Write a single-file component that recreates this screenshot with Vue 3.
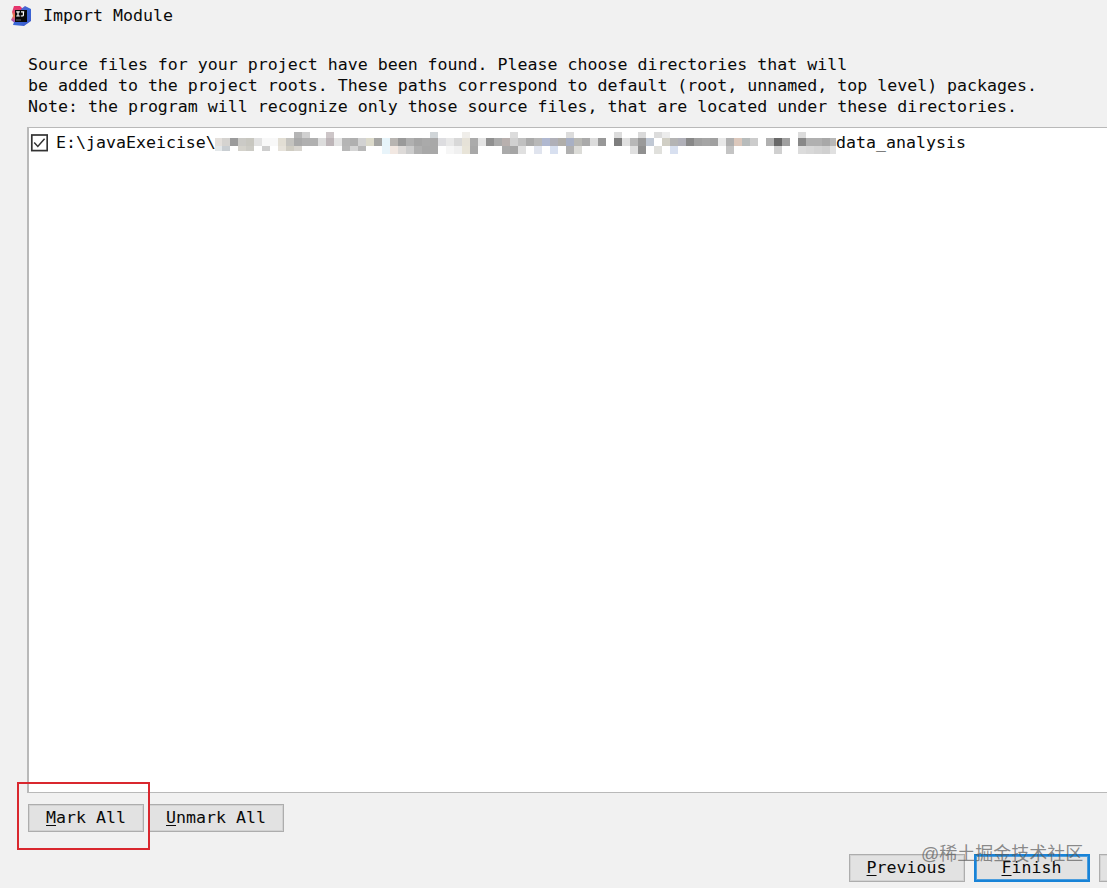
<template>
    <div class="dialog">
        <div class="title-bar">
            <svg class="logo" width="22" height="22" viewBox="0 0 22 22">
                <defs>
                    <linearGradient id="warm" x1="0.6" y1="0" x2="0.4" y2="1">
                        <stop offset="0" stop-color="#e8306c" />
                        <stop offset="0.35" stop-color="#e04470" />
                        <stop offset="0.6" stop-color="#ec8048" />
                        <stop offset="0.8" stop-color="#c85898" />
                        <stop offset="1" stop-color="#7050c8" />
                    </linearGradient>
                    <linearGradient id="cool" x1="0" y1="0" x2="1" y2="1">
                        <stop offset="0" stop-color="#8450b8" />
                        <stop offset="0.5" stop-color="#3868d8" />
                        <stop offset="1" stop-color="#4058c8" />
                    </linearGradient>
                </defs>
                <path d="M4 1 L10 1 L14 5 L13 19 L6 19 L1 15 L3 11 L2 7 Z" fill="url(#warm)" />
                <path d="M11 4 L15 1 L21 4 L21 16 L14 21 L3 20 L4 17 L11 17 Z" fill="url(#cool)" />
                <rect x="5" y="5" width="12" height="12" fill="#080808" />
                <path d="M6.2 6.8h3.6M8 6.8v4.2M6.2 11h3.6M11 6.8h3.2M13.4 6.8v3.2q0 1.3-2.6 .9" stroke="#fff" stroke-width="1.2" fill="none" />
                <path d="M6 15h5" stroke="#666" stroke-width="1" />
            </svg>
            <span class="title">Import Module</span>
        </div>
        <div class="description">
            <div>Source files for your project have been found. Please choose directories that will</div>
            <div>be added to the project roots. These paths correspond to default (root, unnamed, top level) packages.</div>
            <div>Note: the program will recognize only those source files, that are located under these directories.</div>
        </div>
        <div class="list">
            <div class="row">
                <svg class="checkbox" width="18" height="18" viewBox="0 0 18 18">
                    <rect x="1.8" y="1" width="15.4" height="15.6" fill="#fff" stroke="#333" stroke-width="1.7" />
                    <path d="M4.2 8.6 L7.8 12.4 L14.6 4.8" fill="none" stroke="#333" stroke-width="1.5" />
                </svg>
                <span class="path-start">E:\javaExeicise\</span>
                <svg class="mosaic" width="621" height="22" viewBox="0 0 621 22" shape-rendering="crispEdges">
                    <rect v-for="(cell, i) in cells" :key="i" :x="cell.x" :y="cell.y" width="8" :height="cell.h" :fill="cell.color" />
                </svg>
                <span>data_analysis</span>
            </div>
        </div>
        <div class="mark-buttons">
            <button class="btn mark"><u>M</u>ark All</button>
            <button class="btn unmark"><u>U</u>nmark All</button>
        </div>
        <div class="footer">
            <button class="btn"><u>P</u>revious</button>
            <button class="btn primary"><u>F</u>inish</button>
            <button class="btn"></button>
        </div>
        <div class="highlight"></div>
        <div class="watermark">@稀土掘金技术社区</div>
    </div>
</template>

<script setup>
// censored part of the path, 8px columns keyed by column number
const top = {
    10: '#b5b5b5', 11: '#d0d0d0', 14: '#cdc6c8', 27: '#d0d5d8', 31: '#f0eeea', 37: '#dcdcdc',
    44: '#dcdcdc', 50: '#dcdcdc', 53: '#dadada', 55: '#dcdcdc', 56: '#ececec', 73: '#dcdcdc'
};
const middle = [
    '#e4e0dc', '#d5d3d0', '#9b9b9b', '#cbcac6', '#c8c7c0', '#e2e2e2', '#f8f8f8', '#f8f8f8', '#e2ded4', '#c4c3bf',
    '#a9a9a9', '#b0b0b0', '#b0b0b0', '#dcdcdc', '#bdb5b8', '#e4e4e4', '#b5b5b5', '#b0b0b0', '#d2d2d2', '#dcdacb',
    '#a5a5a3', '#e6f4fa', '#b8b5b2', '#9a9a9a', '#b0b0b0', '#a5a5a5', '#aaaaaa', '#a8a8a8', '#dddde0', '#e8e8e8',
    '#d8d8d8', '#e6e2d8', '#ababab', '#e4e4e4', '#909090', '#aaaaaa', '#b8b0ae', '#d0d0d0', '#c0c0c0', '#aaaaaa',
    '#b8b8b8', '#b0b8d0', '#b0b0b8', '#b0aeaa', '#a8b0c4', '#b8b8b4', '#aaaaaa', '#dcdcdc', '#989898', null,
    '#7e7e7e', '#e0e0e0', '#b8b8b8', '#9a9a9a', '#c0c8d4', null, '#d0cec4', '#b4b4b4', '#b0b0b8', '#888888',
    '#a0a0a0', '#a5a5a5', '#a0a0a0', '#e8e8e8', '#b0b0b0', '#dcc8bc', '#b8bcbc', '#cccccc', null, '#b0b0b0',
    '#686868', '#a0a0a0', null, '#888888', '#b0b0b0', '#b0b0b0', '#a8a8a8', '#b8b8b8'
];
const bottom = {
    0: '#e4e8ea', 1: '#c9ced2', 3: '#d4d2cb', 4: '#cccbc5', 6: '#cecece', 8: '#e6e2da', 9: '#cfccc2', 10: '#d8d5cf',
    16: '#b8b8b8', 17: '#d5d5d5', 18: '#b8b8b8', 21: '#e8f4fa', 22: '#f2e8e2', 23: '#dddad8', 24: '#cccccc',
    25: '#b0b0b0', 26: '#a8a8a8', 27: '#a8a8a8', 29: '#f6f6f6', 30: '#f0f0f0', 31: '#e8e4d8', 32: '#a8a8a8',
    36: '#aaaaaa', 37: '#a5a5a5', 38: '#e0e0e0', 40: '#e0e4ee', 42: '#d8e0f0', 44: '#b0b0b0', 45: '#dcdcd8',
    52: '#e0e0e0', 53: '#909090', 55: '#e0e0dc', 57: '#d8e0f0', 64: '#c4c4c4', 70: '#d0d0d0', 73: '#dcdcdc',
    74: '#d8d8d8', 75: '#d4d4d4', 76: '#d0d0d0', 77: '#e0e0e0'
};

const cells = [];
const addRow = (row, y, early, late) => {
    for (const [col, color] of Object.entries(row)) {
        if (!color) continue;
        // the block is a bit shorter on its left side
        cells.push({ x: col * 8 - 1, y, h: Number(col) < 20 ? early : late, color });
    }
}
addRow(top, 0, 6, 6);
addRow(middle, 6, 8, 8);
addRow(bottom, 14, 5, 8);
</script>

<style>
body {
    margin: 0;
    overflow: hidden;
}
</style>

<style scoped>
.dialog {
    position: relative;
    display: flex;
    flex-direction: column;
    width: 1107px;
    height: 888px;
    overflow: hidden;
    background: #f1f1f1;
    color: #0a0a0a;
    font-family: "DejaVu Sans Mono", "Liberation Mono", monospace;
    font-size: 16.6px;
    line-height: 21px;
    white-space: pre;
}
.title-bar {
    display: flex;
    align-items: center;
    height: 32px;
    padding-left: 10px;
    gap: 11px;
}
.title {
    padding-bottom: 2px;
}
.description {
    padding: 22px 0 0 28px;
    height: 73px;
    box-sizing: border-box;
    margin-bottom: 22px;
}
.list {
    box-sizing: border-box;
    height: 666px;
    margin-left: 27px;
    padding: 4px 0 0 2px;
    background: #fff;
    border: solid #b9b9b9;
    border-width: 1px 0 1px 2px;
}
.row {
    display: flex;
    align-items: center;
    height: 22px;
}
.row span {
    padding-bottom: 2px;
}
.checkbox {
    margin: 0 8px 1px -1px;
    flex: none;
}
.path-start {
    width: 159px;
}
.mosaic {
    flex: none;
}
.mark-buttons {
    display: flex;
    gap: 4px;
    margin: 11px 0 0 28px;
}
.btn {
    box-sizing: border-box;
    flex: none;
    width: 116px;
    height: 28px;
    padding: 0 0 2px;
    border: 1px solid #adadad;
    box-shadow: inset 0 0 0 1px #d2d2d2;
    background: #e2e2e2;
    color: inherit;
    font: inherit;
    white-space: pre;
}
.btn u {
    text-decoration-thickness: 1px;
    text-underline-offset: 2px;
}
.unmark {
    width: 136px;
}
.footer {
    display: flex;
    gap: 9px;
    margin: 22px 0 0 848.5px;
}
.primary {
    border: 2px solid #1883d7;
    box-shadow: inset 0 0 0 1px #4b9ddd;
}
/* annotation drawn over the dialog */
.highlight {
    position: absolute;
    left: 17px;
    top: 782px;
    width: 129px;
    height: 64px;
    border: 2px solid #d9272e;
}
.watermark {
    position: absolute;
    left: 921px;
    top: 841px;
    color: rgba(90, 90, 90, 0.7);
    font-family: "Liberation Sans", "Noto Sans CJK SC", sans-serif;
    font-size: 18px;
    line-height: 26px;
}
</style>
